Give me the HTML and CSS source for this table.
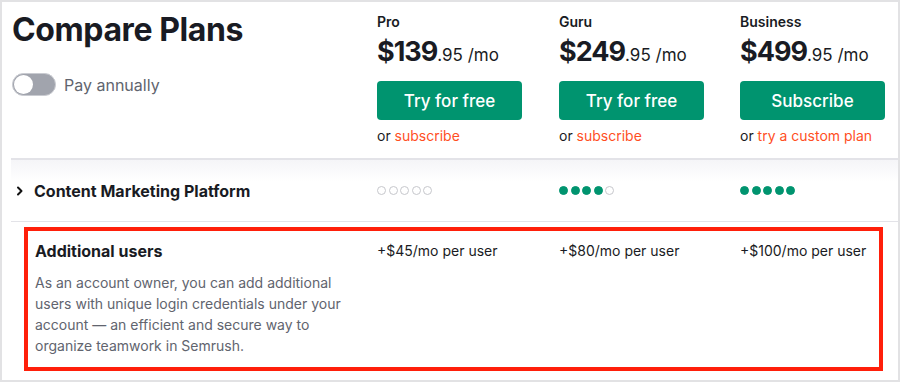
FILE: index.html
```html
<!DOCTYPE html>
<html lang="en">
<head>
    <meta charset="UTF-8">
    <meta name="viewport" content="width=device-width, initial-scale=1.0">
    <title>Compare Plans</title>
    <link rel="stylesheet" href="styles.css">
</head>
<body>
    <div class="frame">
        <header class="plans-head">
            <div class="intro">
                <h1>Compare Plans</h1>
                <label class="toggle">
                    <span class="switch"><span class="knob"></span></span>
                    Pay annually
                </label>
            </div>

            <div class="plan">
                <div class="plan-name">Pro</div>
                <div class="price"><strong>$139</strong>.95 /mo</div>
                <button class="cta">Try for free</button>
                <div class="alt">or <a href="#">subscribe</a></div>
            </div>
            <div class="plan">
                <div class="plan-name">Guru</div>
                <div class="price"><strong>$249</strong>.95 /mo</div>
                <button class="cta">Try for free</button>
                <div class="alt">or <a href="#">subscribe</a></div>
            </div>
            <div class="plan">
                <div class="plan-name">Business</div>
                <div class="price"><strong>$499</strong>.95 /mo</div>
                <button class="cta">Subscribe</button>
                <div class="alt">or <a href="#">try a custom plan</a></div>
            </div>
        </header>

        <div class="table">
            <div class="row feature-row">
                <div class="feature-name">
                    <svg class="chevron" width="8" height="10" viewBox="0 0 8 10">
                        <path d="M2 1.5 L5.5 5 L2 8.5" fill="none" stroke="#111" stroke-width="2" stroke-linecap="round" stroke-linejoin="round"/>
                    </svg>
                    Content Marketing Platform
                </div>
                <div class="cell">
                    <span class="dots"><i></i><i></i><i></i><i></i><i></i></span>
                </div>
                <div class="cell">
                    <span class="dots"><i class="on"></i><i class="on"></i><i class="on"></i><i class="on"></i><i></i></span>
                </div>
                <div class="cell">
                    <span class="dots"><i class="on"></i><i class="on"></i><i class="on"></i><i class="on"></i><i class="on"></i></span>
                </div>
            </div>

            <div class="row addon-row">
                <div class="addon-info">
                    <h3>Additional users</h3>
                    <p>As an account owner, you can add additional users with unique login credentials under your account — an efficient and secure way to organize teamwork in Semrush.</p>
                </div>
                <div class="cell">+$45/mo per user</div>
                <div class="cell">+$80/mo per user</div>
                <div class="cell">+$100/mo per user</div>
            </div>
        </div>
    </div>
</body>
</html>
```

FILE: styles.css
```css
:root {
    --green: #00946f;
    --orange: #ff4f1f;
    --text: #191b23;
    --muted: #61646e;
    --line: #e3e3e8;
    --highlight: #ff1f0a;
}

* {
    box-sizing: border-box;
}

body {
    margin: 0;
    font-family: 'Inter', 'Roboto', sans-serif;
    color: var(--text);
    background: #fff;
}

.frame {
    width: 900px;
    height: 382px;
    border: 2px solid #e2e2e4;
    display: flex;
    flex-direction: column;
    overflow: hidden;
}

/* header */

.plans-head {
    display: grid;
    grid-template-columns: 365px 182px 181px 1fr;
    margin-left: 9px;
    padding-left: 1px;
    height: 158px;
    border-bottom: 2px solid var(--line);
}

.intro {
    padding-top: 8px;
}

h1 {
    margin: 0;
    font-size: 32px;
    line-height: 40px;
    font-weight: 700;
    letter-spacing: -0.4px;
}

.toggle {
    display: flex;
    align-items: center;
    gap: 8px;
    margin-top: 23px;
    font-size: 16px;
    color: var(--muted);
}

.switch {
    width: 44px;
    height: 23px;
    border-radius: 12px;
    background: #a1a4ad;
    border: 1px solid #c9cbd1;
    display: flex;
    align-items: center;
    padding: 1px;
}

.knob {
    width: 19px;
    height: 19px;
    border-radius: 50%;
    background: #fff;
}

.plan {
    padding-top: 10px;
}

.plan-name {
    font-size: 14px;
    line-height: 20px;
    font-weight: 600;
}

.price {
    margin-top: 2px;
    height: 36px;
    font-size: 17px;
    line-height: 36px;
    color: var(--text);
}

.price strong {
    font-size: 27px;
    font-weight: 700;
    letter-spacing: -1px;
}

.cta {
    display: block;
    margin-top: 11px;
    width: 145px;
    height: 39px;
    border: none;
    border-radius: 4px;
    background: var(--green);
    color: #fff;
    font-family: inherit;
    font-size: 17px;
    font-weight: 500;
    cursor: pointer;
}

.alt {
    margin-top: 6px;
    font-size: 14px;
    line-height: 20px;
}

.alt a {
    color: var(--orange);
    text-decoration: none;
}

/* table */

.table {
    margin-left: 9px;
    flex: 1;
}

.row {
    display: grid;
    grid-template-columns: 366px 182px 181px 1fr;
}

.feature-row {
    height: 62px;
    align-items: center;
    border-bottom: 1px solid var(--line);
    background: linear-gradient(#f5f5f8, #fff 22px);
}

.feature-name {
    display: flex;
    align-items: center;
    gap: 10px;
    padding-left: 5px;
    font-size: 16px;
    font-weight: 700;
}

.chevron {
    display: block;
}

.dots {
    display: flex;
    gap: 2.5px;
}

.dots i {
    width: 9px;
    height: 9px;
    border-radius: 50%;
    border: 1.5px solid #c6c7cc;
}

.dots i.on {
    background: var(--green);
    border-color: var(--green);
}

.addon-row {
    grid-template-columns: 349px 182px 181px 1fr;
    margin: 5px 15px 0 13px;
    height: 144px;
    border: 4px solid var(--highlight);
    padding-top: 9px;
}

.addon-info {
    padding-left: 7px;
}

.addon-info h3 {
    margin: 0;
    font-size: 16px;
    line-height: 22px;
    font-weight: 700;
}

.addon-info p {
    margin: 10px 0 0;
    width: 310px;
    font-size: 14px;
    line-height: 21px;
    color: var(--muted);
}

.addon-row .cell {
    font-size: 14px;
    line-height: 22px;
}
```
